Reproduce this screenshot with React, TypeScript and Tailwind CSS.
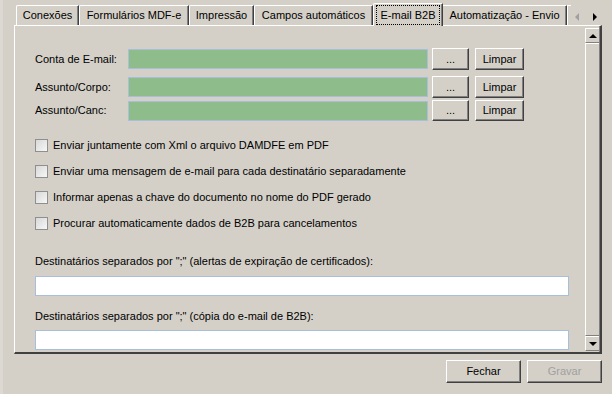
const font = { fontFamily: '"Liberation Sans", Arial, sans-serif' };

const tabs = [
  { label: "Conexões", w: "w-[63px]" },
  { label: "Formulários MDF-e", w: "w-[110px]" },
  { label: "Impressão", w: "w-[65px]" },
  { label: "Campos automáticos", w: "w-[119px]" },
];

const Btn = ({ label, className = "" }: { label: string; className?: string }) => (
  <button
    type="button"
    className={`flex items-center justify-center bg-[#d4d0c8] border-t border-l border-white border-r border-b border-r-[#404040] border-b-[#404040] shadow-[inset_-1px_-1px_0_#808080] text-[11px] text-black ${className}`}
  >
    {label}
  </button>
);

const Checkbox = ({ label }: { label: string }) => (
  <label className="flex items-center h-[16px] gap-[5px]">
    <span className="w-[13px] h-[13px] border border-[#8e8f8f] bg-gradient-to-br from-[#d8d8d8] to-[#f7f7f7]" />
    <span className="text-[11px] text-black">{label}</span>
  </label>
);

const FieldRow = ({ label, h, mt }: { label: string; h: string; mt: string }) => (
  <div className={`flex items-center ${h} ${mt}`}>
    <span className="w-[93px] text-[11px] text-black">{label}</span>
    <div className="w-[300px] h-[20px] bg-[#8fbc8b] border border-[#a8bfdc]" />
    <Btn label="..." className="ml-[4px] w-[37px] h-full" />
    <Btn label="Limpar" className="ml-[6px] w-[49px] h-full" />
  </div>
);

export default function App() {
  return (
    <div className="w-[612px] h-[394px] bg-[#d4d0c8] flex overflow-hidden select-none" style={font}>
      <div className="w-[3px] h-full bg-[#dcd9d2]" />
      <div className="flex-1 flex flex-col">
        {/* Tabs */}
        <div className="flex items-end h-[25px] pl-[13px]">
          {tabs.map((t) => (
            <div
              key={t.label}
              className={`${t.w} h-[20px] flex items-center justify-center border-l border-t border-white rounded-tl-[2px] border-r border-r-[#404040] shadow-[inset_-1px_0_0_#808080] text-[11px] text-black`}
            >
              {t.label}
            </div>
          ))}
          <div className="relative z-10 w-[70px] h-[23px] -mb-px bg-[#d4d0c8] flex items-start justify-center pt-[1px] border-l border-t border-white rounded-tl-[2px] border-r border-r-[#404040] shadow-[inset_-1px_0_0_#808080] text-[11px] text-black">
            <span className="px-[3px] h-[20px] flex items-center border border-dotted border-black">E-mail B2B</span>
          </div>
          <div className="w-[124px] h-[20px] flex items-center justify-center border-t border-white border-r border-r-[#404040] shadow-[inset_-1px_0_0_#808080] text-[11px] text-black">
            Automatização - Envio
          </div>
          <div className="w-[4px] h-[20px] border-l border-t border-white" />
          <div className="self-start mt-[13px] ml-[4px] flex items-center">
            <span className="w-0 h-0 border-y-[4px] border-y-transparent border-r-[4px] border-r-[#a0a0a0]" />
            <span className="ml-[14px] w-0 h-0 border-y-[4px] border-y-transparent border-l-[4px] border-l-black" />
          </div>
        </div>

        {/* Panel */}
        <div className="ml-[11px] w-[588px] h-[329px] flex border-l border-t border-white border-r-2 border-r-[#404040] border-b-2 border-b-[#404040]">
          <div className="flex-1 overflow-hidden pl-[20px] flex flex-col">
            <FieldRow label="Conta de E-mail:" h="h-[22px]" mt="mt-[22px]" />
            <FieldRow label="Assunto/Corpo:" h="h-[22px]" mt="mt-[6px]" />
            <FieldRow label="Assunto/Canc:" h="h-[21px]" mt="mt-[2px]" />

            <div className="mt-[16px] flex flex-col gap-[10px]">
              <Checkbox label="Enviar juntamente com Xml o arquivo DAMDFE em PDF" />
              <Checkbox label="Enviar uma mensagem de e-mail para cada destinatário separadamente" />
              <Checkbox label="Informar apenas a chave do documento no nome do PDF gerado" />
              <Checkbox label="Procurar automaticamente dados de B2B para cancelamentos" />
            </div>

            <span className="mt-[24px] h-[13px] leading-[13px] text-[11px] text-black">
              Destinatários separados por ";" (alertas de expiração de certificados):
            </span>
            <div className="mt-[8px] w-[534px] h-[20px] shrink-0 bg-white border border-[#a8bfdc]" />
            <span className="mt-[14px] h-[13px] leading-[13px] text-[11px] text-black">
              Destinatários separados por ";" (cópia do e-mail de B2B):
            </span>
            <div className="mt-[7px] w-[534px] h-[20px] shrink-0 bg-white border border-[#a8bfdc]" />
          </div>

          {/* Scrollbar */}
          <div className="w-[15px] flex flex-col pt-[2px] pb-[1px] border-r border-r-[#808080]">
            <div className="h-[15px] flex items-center justify-center border-t border-l border-white border-b border-b-[#808080]">
              <span className="w-0 h-0 border-x-[4px] border-x-transparent border-b-[4px] border-b-black" />
            </div>
            <div className="flex-1 border-t border-l border-white border-b border-b-[#808080]" />
            <div className="h-[15px] flex items-center justify-center border-t border-l border-white border-b border-b-[#808080]">
              <span className="w-0 h-0 border-x-[4px] border-x-transparent border-t-[4px] border-t-black" />
            </div>
          </div>
        </div>

        {/* Footer */}
        <div className="mt-[6px] flex justify-end gap-[6px] pr-[10px]">
          <Btn label="Fechar" className="w-[75px] h-[23px]" />
          <button
            type="button"
            className="flex items-center justify-center w-[75px] h-[23px] bg-[#d4d0c8] border-t border-l border-white border-r border-b border-r-[#404040] border-b-[#404040] shadow-[inset_-1px_-1px_0_#808080] text-[11px] text-[#a0a0a0]"
          >
            Gravar
          </button>
        </div>
      </div>
    </div>
  );
}
